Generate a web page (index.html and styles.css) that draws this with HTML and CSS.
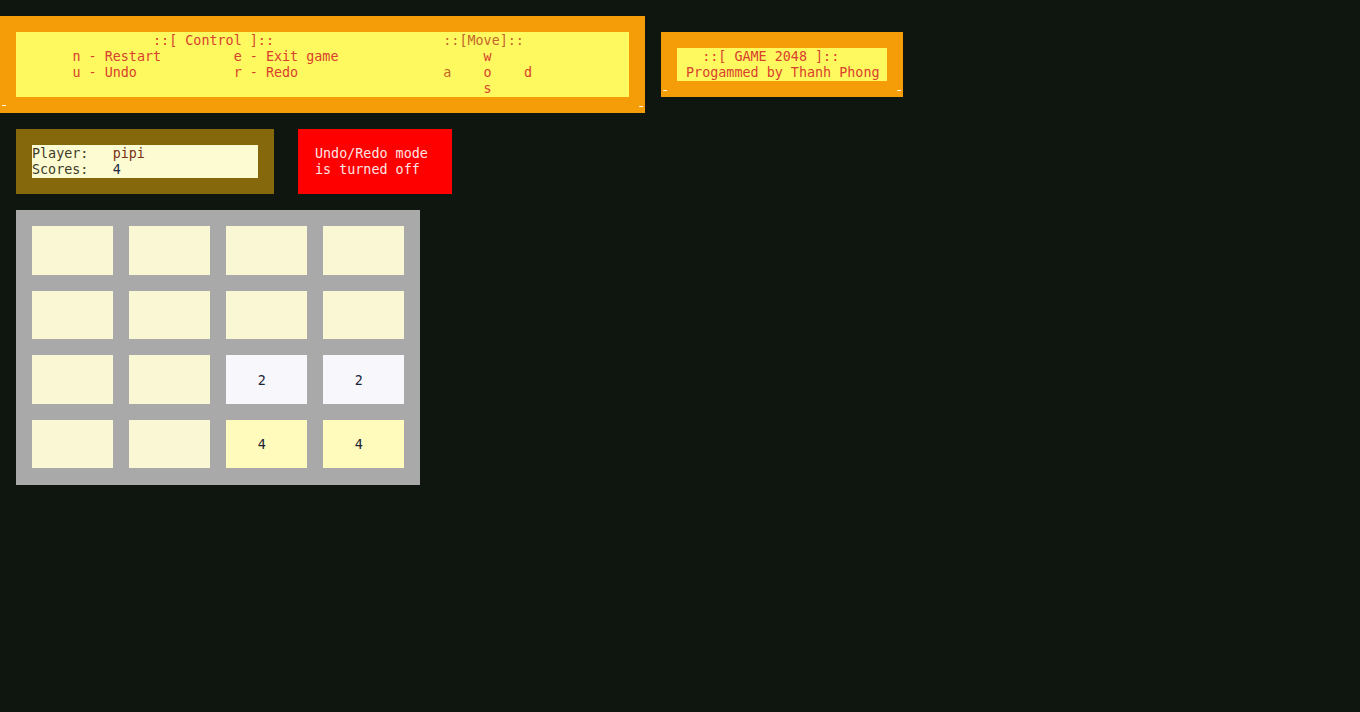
FILE: index.html
```html
<!DOCTYPE html>
<html>
<head>
<meta charset="utf-8">
<title>GAME 2048</title>
<link rel="stylesheet" href="styles.css">
</head>
<body>
<div class="screen">
  <div class="top">
    <div class="box control">
      <pre class="panel yellow"><span class="red">                 ::[ Control ]::                     </span><span class="brown">::[Move]::</span>
<span class="red">       n - Restart         e - Exit game                  w</span>
<span class="red">       u - Undo            r - Redo                  </span><span class="brown">a</span><span class="red">    o    d</span>
<span class="red">                                                          s</span></pre>
    </div>
    <div class="box title">
      <pre class="panel yellow"><span class="red">   ::[ GAME 2048 ]::</span>
<span class="red"> Progammed by Thanh Phong</span></pre>
    </div>
  </div>
  <div class="status">
    <div class="score">
      <pre class="panel cream"><span class="label">Player:   </span><span class="name">pipi</span>
<span class="label">Scores:   </span><span class="num">4</span></pre>
    </div>
    <pre class="notice">Undo/Redo mode
is turned off</pre>
  </div>
  <div class="board">
    <div class="tile"></div>
    <div class="tile"></div>
    <div class="tile"></div>
    <div class="tile"></div>
    <div class="tile"></div>
    <div class="tile"></div>
    <div class="tile"></div>
    <div class="tile"></div>
    <div class="tile"></div>
    <div class="tile"></div>
    <div class="tile t2">2</div>
    <div class="tile t2">2</div>
    <div class="tile"></div>
    <div class="tile"></div>
    <div class="tile t4">4</div>
    <div class="tile t4">4</div>
  </div>
</div>
</body>
</html>
```

FILE: styles.css
```css
html, body {
  margin: 0;
  padding: 0;
  background: #0e160f;
  height: 100%;
}

.screen {
  padding-top: 16px;
  font-family: "DejaVu Sans Mono", "Liberation Mono", monospace;
  font-size: 13.4px;
  line-height: 16px;
}

pre {
  margin: 0;
  font: inherit;
  white-space: pre;
}

.top {
  display: flex;
  align-items: flex-start;
  gap: 16px;
}

.box {
  position: relative;
  box-sizing: border-box;
  background: #f49d08;
  padding: 16px;
}

.box::before,
.box::after {
  content: "";
  position: absolute;
  width: 4px;
  height: 1px;
  background: #fff4d8;
}

.control {
  width: 645px;
  height: 97px;
}

.control::before {
  left: 2px;
  bottom: 7px;
}

.control::after {
  right: 2px;
  bottom: 6px;
}

.title {
  margin-top: 16px;
  width: 242px;
  height: 65px;
}

.title::before {
  left: 2px;
  bottom: 6px;
}

.title::after {
  right: 2px;
  bottom: 6px;
}

.panel {
  box-sizing: border-box;
  height: 100%;
  padding-top: 1px;
  overflow: hidden;
}

.title .panel {
  padding-left: 1px;
}

.yellow {
  background: #fef95e;
}

.cream {
  background: #fdfbd2;
}

.red {
  color: #d8402e;
}

.brown {
  color: #c4662a;
}

.status {
  display: flex;
  align-items: flex-start;
  gap: 24px;
  margin-top: 16px;
  padding-left: 16px;
}

.score {
  box-sizing: border-box;
  width: 258px;
  height: 65px;
  padding: 16px;
  background: #86680c;
}

.label {
  color: #3c3a26;
}

.name {
  color: #7a3212;
}

.num {
  color: #1e2a48;
}

.notice {
  box-sizing: border-box;
  width: 154px;
  height: 65px;
  padding: 17px 0 0 17px;
  background: #fe0000;
  color: #ffe4e4;
}

.board {
  box-sizing: border-box;
  margin: 16px 0 0 16px;
  width: 404px;
  height: 275px;
  padding: 16px;
  background: #a9a9a9;
  display: grid;
  grid-template-columns: repeat(4, 81px);
  grid-template-rows: repeat(4, 48.5px);
  column-gap: 15.9px;
  row-gap: 16px;
}

.tile {
  box-sizing: border-box;
  background: #f9f7d4;
  display: flex;
  align-items: center;
  padding: 3px 0 0 32px;
  color: #1c2438;
}

.t2 {
  background: #f8f8fc;
}

.t4 {
  background: #fffbbd;
}
```
